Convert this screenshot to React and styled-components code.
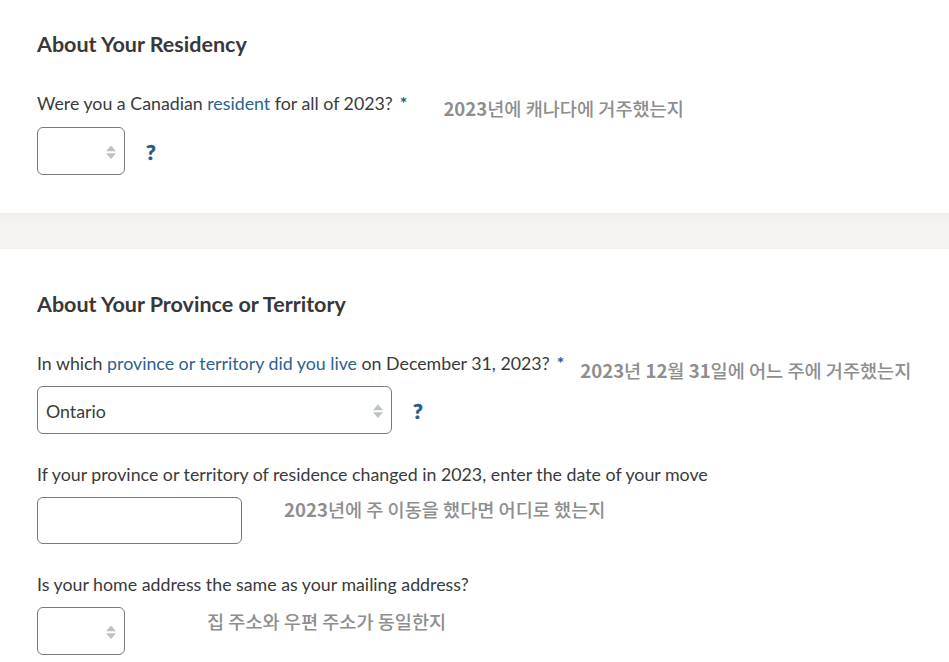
import React from "react";
import styled, { createGlobalStyle } from "styled-components";

const Global = createGlobalStyle`
  html, body { margin: 0; padding: 0; background: #ffffff; }
  body { font-family: Lato, "Noto Sans", sans-serif; color: #3a3a3a; }
  * { box-sizing: border-box; }
`;

const Page = styled.div`
  width: 949px;
  display: flex;
  flex-direction: column;
`;

const Section = styled.section`
  background: #ffffff;
  padding: ${(p) => (p.$first ? "30px" : "41px")} 37px 38px;
  display: flex;
  flex-direction: column;
`;

const Band = styled.div`
  height: 36px;
  background: linear-gradient(#eeedeb 0px, #f4f3f1 8px, #f6f5f3 100%);
  border-bottom: 1px solid #f2f1ef;
`;

const Heading = styled.h2`
  margin: 0 0 33px;
  font-size: 21.5px;
  line-height: 28px;
  font-weight: 700;
  color: #383838;
`;

const Field = styled.div`
  display: flex;
  flex-direction: column;
  gap: ${(p) => p.$gap || 11}px;
  & + & { margin-top: 28px; }
`;

const LabelRow = styled.div`
  display: flex;
  align-items: center;
  height: 24px;
`;

const Label = styled.label`
  font-size: 17.8px;
  line-height: 24px;
  color: #3a3a3a;
  white-space: nowrap;
`;

const Link = styled.span`
  color: #2b6290;
`;

const Required = styled.span`
  color: #1f5c8b;
  font-weight: 700;
  margin-left: 7px;
`;

const Note = styled.span`
  font-family: "Noto Sans CJK KR", sans-serif;
  font-size: 18.6px;
  font-weight: 500;
  color: #8e8e8e;
  white-space: nowrap;
  margin-left: ${(p) => p.$gap || 0}px;
  position: relative;
  top: ${(p) => p.$dy || 0}px;
`;

const Num = styled.span`
  font-weight: 700;
`;

const ControlRow = styled.div`
  display: flex;
  align-items: ${(p) => (p.$top ? "flex-start" : "center")};
`;

const SelectBox = styled.div`
  width: ${(p) => p.$w}px;
  height: 48px;
  border: 1px solid #7a7a7a;
  border-radius: 6px;
  background: #fff;
  display: flex;
  align-items: center;
  justify-content: space-between;
  padding: 1px 7px 0 8px;
  font-size: 17.8px;
  color: #3a3a3a;
`;

const TextBox = styled.div`
  width: ${(p) => p.$w}px;
  height: 47px;
  border: 1px solid #7a7a7a;
  border-radius: 6px;
  background: #fff;
`;

const Help = styled.span`
  font-size: 21px;
  font-weight: 900;
  color: #1f5c8b;
  margin-left: 21px;
  -webkit-text-stroke: 0.5px #1f5c8b;
`;

const Arrows = () => (
  <svg width="12" height="16" viewBox="0 0 12 16">
    <path d="M6 1.5 L11 7.2 H1 Z" fill="#bcc2c7" />
    <path d="M6 15 L11 9.3 H1 Z" fill="#bcc2c7" />
  </svg>
);

const Select = ({ w, value }) => (
  <SelectBox $w={w}>
    <span>{value || ""}</span>
    <Arrows />
  </SelectBox>
);

export default function App() {
  return (
    <Page>
      <Global />
      <Section $first>
        <Heading>About Your Residency</Heading>
        <Field $gap={12}>
          <LabelRow>
            <Label>
              Were you a Canadian <Link>resident</Link> for all of 2023?
              <Required>*</Required>
            </Label>
            <Note $gap={36} $dy={4}><Num>2023</Num>년에 캐나다에 거주했는지</Note>
          </LabelRow>
          <ControlRow>
            <Select w={88} />
            <Help>?</Help>
          </ControlRow>
        </Field>
      </Section>
      <Band />
      <Section>
        <Heading>About Your Province or Territory</Heading>
        <Field>
          <LabelRow>
            <Label>
              In which <Link>province or territory did you live</Link> on December 31, 2023?
              <Required>*</Required>
            </Label>
            <Note $gap={16} $dy={6}><Num>2023</Num>년 <Num>12</Num>월 <Num>31</Num>일에 어느 주에 거주했는지</Note>
          </LabelRow>
          <ControlRow>
            <Select w={355} value="Ontario" />
            <Help>?</Help>
          </ControlRow>
        </Field>
        <Field>
          <LabelRow>
            <Label>If your province or territory of residence changed in 2023, enter the date of your move</Label>
          </LabelRow>
          <ControlRow $top>
            <TextBox $w={205} />
            <Note $gap={42} $dy={-2}><Num>2023</Num>년에 주 이동을 했다면 어디로 했는지</Note>
          </ControlRow>
        </Field>
        <Field>
          <LabelRow>
            <Label>Is your home address the same as your mailing address?</Label>
          </LabelRow>
          <ControlRow $top>
            <Select w={88} />
            <Note $gap={82} $dy={0}>집 주소와 우편 주소가 동일한지</Note>
          </ControlRow>
        </Field>
      </Section>
    </Page>
  );
}
